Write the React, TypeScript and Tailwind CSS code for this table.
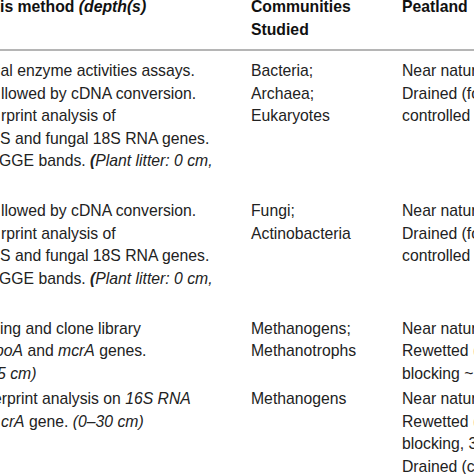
import React from 'react';

type Row = {
  pad: string;
  method: React.ReactNode[];
  communities: string[];
  peatland: React.ReactNode[];
};

const rows: Row[] = [
  {
    pad: 'pt-[9px]',
    method: [
      <span className="-ml-[3px]">ial enzyme activities assays.</span>,
      <span className="ml-[1px]">llowed by cDNA conversion.</span>,
      <span className="ml-[1px]">rprint analysis of</span>,
      <span>S and fungal 18S RNA genes.</span>,
      <span className="-ml-[1px]">
        GGE bands. <b className="italic">(</b>
        <i>Plant litter: 0 cm,</i>
      </span>,
      <span>&nbsp;</span>,
    ],
    communities: ['Bacteria;', 'Archaea;', 'Eukaryotes'],
    peatland: ['Near natural;', 'Drained (forestry);', 'controlled drainage'],
  },
  {
    pad: 'pt-[5px]',
    method: [
      <span className="ml-[1px]">llowed by cDNA conversion.</span>,
      <span className="ml-[1px]">rprint analysis of</span>,
      <span>S and fungal 18S RNA genes.</span>,
      <span className="-ml-[1px]">
        GGE bands. <b className="italic">(</b>
        <i>Plant litter: 0 cm,</i>
      </span>,
      <span>&nbsp;</span>,
    ],
    communities: ['Fungi;', 'Actinobacteria'],
    peatland: ['Near natural;', 'Drained (forestry);', 'controlled drainage'],
  },
  {
    pad: 'pt-[5px]',
    method: [
      <span>ing and clone library</span>,
      <span className="-ml-[5px]">
        <i>poA</i> and <i>mcrA</i> genes.
      </span>,
      <i className="-ml-[3px]">5 cm)</i>,
    ],
    communities: ['Methanogens;', 'Methanotrophs'],
    peatland: ['Near natural;', 'Rewetted (ditch', 'blocking ~10 years)'],
  },
  {
    pad: 'pt-[3px]',
    method: [
      <span className="-ml-[7px]">
        erprint analysis on <i>16S RNA</i>
      </span>,
      <span className="ml-[1px]">
        <i>crA</i> gene. <i>(0–30 cm)</i>
      </span>,
    ],
    communities: ['Methanogens'],
    peatland: ['Near natural;', 'Rewetted (ditch', 'blocking, 3 years);', 'Drained (cut-over)'],
  },
];

const line = 'h-[22.5px] leading-[22.5px] whitespace-nowrap';

export default function App() {
  return (
    <div className="w-[474px] h-[474px] overflow-hidden bg-white text-[15.75px] text-[#222] font-['Liberation_Sans',Arial,sans-serif]">
      <div className="-mt-[4px]">
        <div className="grid grid-cols-[251px_151px_1fr] pb-[8px] border-b-2 border-[#b5b5b5] font-bold text-[#111]">
          <div className={line}>
            is method <i>(depth(s)</i>
          </div>
          <div>
            <div className={line}>Communities</div>
            <div className={line}>Studied</div>
          </div>
          <div className={line}>Peatland</div>
        </div>
        {rows.map((row, i) => (
          <div key={i} className={`grid grid-cols-[251px_151px_1fr] ${row.pad}`}>
            <div className="overflow-hidden">
              {row.method.map((m, j) => (
                <div key={j} className={line}>
                  {m}
                </div>
              ))}
            </div>
            <div>
              {row.communities.map((c, j) => (
                <div key={j} className={line}>
                  {c}
                </div>
              ))}
            </div>
            <div>
              {row.peatland.map((p, j) => (
                <div key={j} className={line}>
                  {p}
                </div>
              ))}
            </div>
          </div>
        ))}
      </div>
    </div>
  );
}
